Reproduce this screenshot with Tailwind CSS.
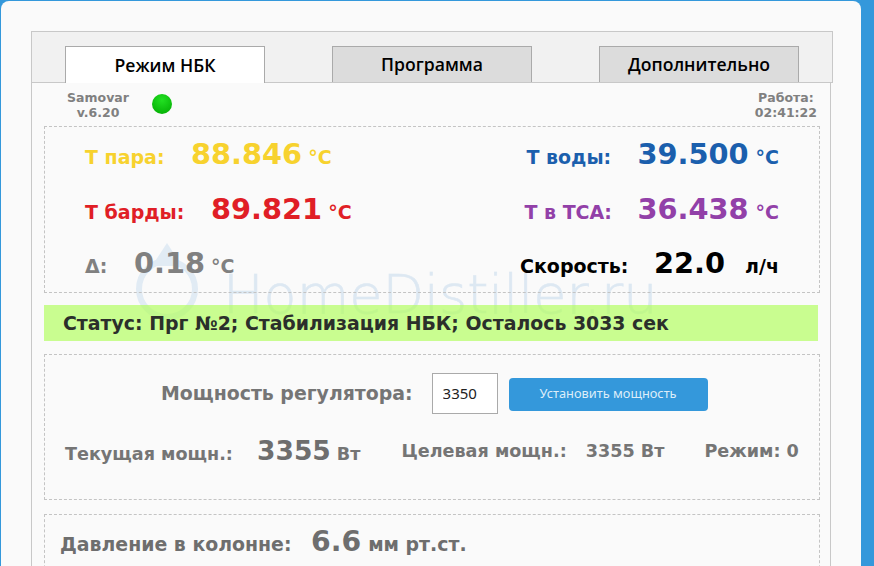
<!DOCTYPE html>
<html lang="en">
  <head>
    <meta charset="UTF-8" />
    <title>Samovar</title>
    <script src="https://cdn.jsdelivr.net/npm/@tailwindcss/browser@4"></script>
  </head>
  <body class="h-[566px] overflow-hidden bg-[#3498db] font-['DejaVu_Sans',sans-serif]">
    <!-- Card -->
    <div class="relative ml-px mt-px h-[565px] w-[860px] overflow-hidden rounded-t-lg bg-[#fafafa] pl-[30px] pt-[30px]">
      <!-- Watermark -->
      <div class="absolute left-[134px] top-[241px] flex items-start">
        <svg width="64" height="80" viewBox="0 0 64 80" fill="none">
          <circle cx="32" cy="47" r="28" stroke="#e1ebf4" stroke-width="6" />
          <path d="M32 1 L47 24 H17 Z" fill="#e1ebf4" />
        </svg>
        <span class="ml-6 mt-[21px] font-['DejaVu_Sans',sans-serif] text-[54px] font-extralight leading-[1.2] text-[#dde8f2] [-webkit-text-stroke:0.6px_#dde8f2]">HomeDistiller.ru</span>
      </div>

      <!-- Tabs -->
      <div class="relative flex h-[52px] w-[802px] items-end gap-[67px] border border-[#c8c8c8] bg-[#f1f1f1] pl-[33px]">
        <div class="-mb-px flex h-[37px] w-[200px] items-center justify-center border border-b-0 border-[#aaa] bg-white font-['Open_Sans',sans-serif] text-[17.6px] font-semibold text-black">Режим НБК</div>
        <div class="flex h-[36px] w-[200px] items-center justify-center border border-b-0 border-[#aaa] bg-[#dcdcdc] font-['Open_Sans',sans-serif] text-[17.6px] font-semibold text-black">Программа</div>
        <div class="flex h-[36px] w-[200px] items-center justify-center border border-b-0 border-[#aaa] bg-[#dcdcdc] font-['Open_Sans',sans-serif] text-[17.6px] font-semibold text-black">Дополнительно</div>
      </div>

      <!-- Content -->
      <div class="relative h-[520px] w-[800px] border-x border-[#c8c8c8] px-3">
        <!-- Version row -->
        <div class="flex h-[43px] items-start pt-[7px] text-[12.5px] font-bold leading-[15px] text-[#808080]">
          <div class="ml-[22px] w-[64px] text-center">Samovar<br />v.6.20</div>
          <div class="ml-[22px] mt-[4px] h-5 w-5 rounded-full bg-[radial-gradient(circle_at_50%_30%,#22e022,#00a800)]"></div>
          <div class="ml-auto mr-[1px] text-center">Работа:<br />02:41:22</div>
        </div>

        <!-- Temperatures -->
        <div class="flex h-[167px] w-[776px] flex-col border border-dashed border-[#c4c4c4] px-10 font-bold">
          <div class="flex h-[55px] items-center justify-between">
            <div class="flex items-baseline text-[#f7d22e]">
              <span class="w-[106px] text-[19px]">Т пара:</span>
              <span class="text-[28.8px]">88.846</span>
              <span class="ml-[6px] text-[19px]">°C</span>
            </div>
            <div class="flex items-baseline text-[#1b5fad]">
              <span class="w-[111px] text-[19px]">Т воды:</span>
              <span class="text-[28.8px]">39.500</span>
              <span class="ml-[7px] text-[19px]">°C</span>
            </div>
          </div>
          <div class="flex h-[55px] items-center justify-between">
            <div class="flex items-baseline text-[#e01e26]">
              <span class="w-[126px] text-[19px]">Т барды:</span>
              <span class="text-[28.8px]">89.821</span>
              <span class="ml-[6px] text-[19px]">°C</span>
            </div>
            <div class="flex items-baseline text-[#9240a8]">
              <span class="w-[113px] text-[19px]">Т в ТСА:</span>
              <span class="text-[28.8px]">36.438</span>
              <span class="ml-[7px] text-[19px]">°C</span>
            </div>
          </div>
          <div class="flex h-[54px] items-center justify-between">
            <div class="flex items-baseline text-[#808080]">
              <span class="w-[49px] text-[19px]">Δ:</span>
              <span class="text-[28.8px]">0.18</span>
              <span class="ml-[6px] text-[19px]">°C</span>
            </div>
            <div class="flex items-baseline text-black">
              <span class="w-[134px] text-[19px]">Скорость:</span>
              <span class="text-[28.8px]">22.0</span>
              <span class="ml-[20px] text-[19px]">л/ч</span>
            </div>
          </div>
        </div>

        <!-- Status -->
        <div class="mt-3 flex h-9 w-[774px] items-center bg-[#b4fd63]/70 pl-[19px] text-[18.9px] font-bold text-[#2b2f2b]">Статус: Прг №2; Стабилизация НБК; Осталось 3033 сек</div>

        <!-- Power -->
        <div class="mt-[13px] h-[146px] w-[776px] border border-dashed border-[#c4c4c4] font-bold text-[#757575]">
          <div class="flex h-[74px] items-center pl-[116px] pt-[2px]">
            <span class="text-[18.9px]">Мощность регулятора:</span>
            <input value="3350" class="ml-[19px] h-[41px] w-[66px] border border-[#aaa] bg-white pl-[10px] font-['Noto_Sans',sans-serif] text-[15px] font-normal text-[#222]" />
            <button class="ml-[11px] mt-[2px] h-[33px] w-[199px] rounded-sm bg-[#3498db] font-['Noto_Sans',sans-serif] text-[12.8px] font-normal text-[#dcedf9]">Установить мощность</button>
          </div>
          <div class="mt-[2px] flex items-start pl-5">
            <div class="flex items-baseline">
              <span class="w-[192px] text-[17.6px]">Текущая мощн.:</span>
              <span class="text-[26.5px] text-[#6e6e6e]">3355</span>
              <span class="ml-[6px] text-[17.6px]">Вт</span>
            </div>
            <div class="mt-[7px] flex items-baseline text-[17.6px]">
              <span class="ml-[41px]">Целевая мощн.:</span>
              <span class="ml-[19px]">3355 Вт</span>
              <span class="ml-[40px]">Режим: 0</span>
            </div>
          </div>
        </div>

        <!-- Pressure -->
        <div class="mt-[14px] h-[80px] w-[776px] border border-dashed border-[#c4c4c4] pl-[15px] pt-[6px] font-bold text-[#6e6e6e]">
          <div class="flex items-baseline">
            <span class="w-[251px] text-[18.9px]">Давление в колонне:</span>
            <span class="text-[28.3px]">6.6</span>
            <span class="ml-[7px] text-[18.9px]">мм рт.ст.</span>
          </div>
        </div>
      </div>
    </div>
  </body>
</html>
